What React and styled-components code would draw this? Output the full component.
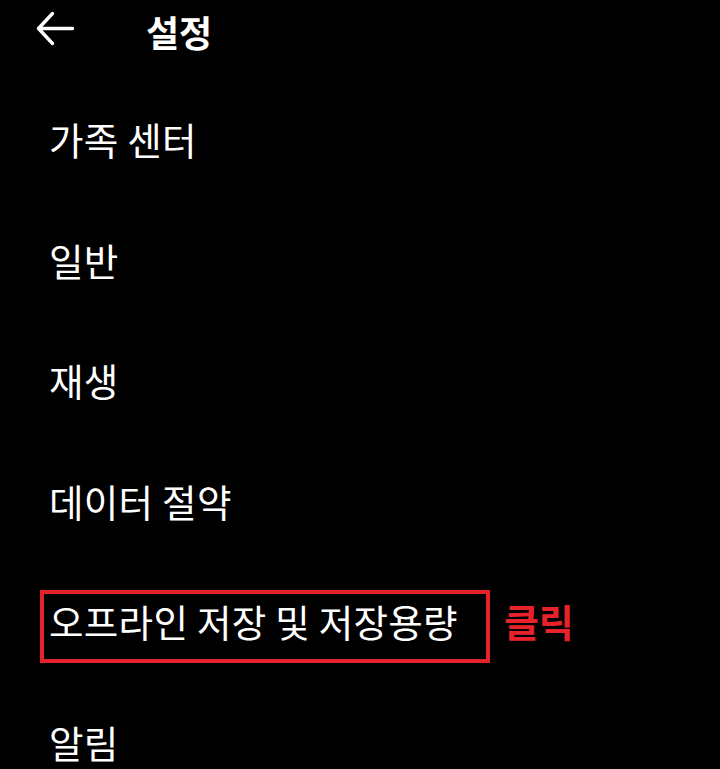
import React from "react";
import styled, { createGlobalStyle } from "styled-components";

const Global = createGlobalStyle`
  html, body { margin: 0; padding: 0; background: #000; }
  body { font-family: "Noto Sans CJK KR", "Noto Sans", sans-serif; color: #fff; }
`;

const Page = styled.div`
  width: 720px;
  height: 769px;
  background: #000;
  overflow: hidden;
`;

const Header = styled.header`
  height: 62px;
  display: flex;
  align-items: center;
  padding-left: 36px;
  margin-bottom: 17px;
`;

const Back = styled.button`
  width: 40px;
  height: 40px;
  padding: 0;
  border: 0;
  background: none;
  display: flex;
  align-items: center;
  justify-content: center;
`;

const Title = styled.h1`
  margin: 0 0 0 70px;
  font-size: 36px;
  font-weight: 700;
  line-height: 1;
  color: #fff;
`;

const List = styled.ul`
  list-style: none;
  margin: 0;
  padding: 0;
`;

const Row = styled.li`
  height: 120.5px;
  display: flex;
  align-items: center;
  padding-left: 49px;
  gap: 46px;
`;

const Label = styled.span`
  position: relative;
  font-size: 37.5px;
  line-height: 36px;
  letter-spacing: 0.3px;
  font-weight: 400;
  color: #fff;
  white-space: nowrap;

  ${(p) =>
    p.$highlight &&
    `
    &::after {
      content: "";
      position: absolute;
      left: -9px;
      right: -32px;
      top: -13px;
      bottom: -24px;
      border: 4px solid #e3222a;
    }
  `}
`;

const Note = styled.span`
  font-size: 38px;
  line-height: 36px;
  font-weight: 700;
  color: #e8222b;
`;

const items = [
  "가족 센터",
  "일반",
  "재생",
  "데이터 절약",
  "오프라인 저장 및 저장용량",
  "알림",
];

export default function App() {
  return (
    <Page>
      <Global />
      <Header>
        <Back aria-label="뒤로">
          <svg width="40" height="40" viewBox="0 0 40 40" fill="none">
            <path
              d="M37 18 L3 18 M17 3 L3 18 L17 33"
              stroke="#fff"
              strokeWidth="3.4"
              strokeLinecap="round"
              strokeLinejoin="round"
              transform="translate(-0.5 -0.5)"
            />
          </svg>
        </Back>
        <Title>설정</Title>
      </Header>
      <List>
        {items.map((t) => {
          const hl = t.startsWith("오프라인");
          return (
            <Row key={t}>
              <Label $highlight={hl}>{t}</Label>
              {hl && <Note>클릭</Note>}
            </Row>
          );
        })}
      </List>
    </Page>
  );
}
